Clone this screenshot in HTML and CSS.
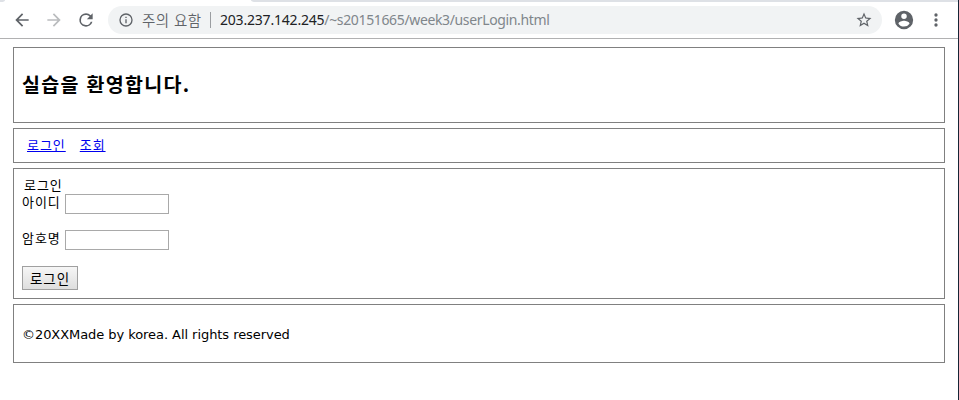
FILE: index.html
```html
<!DOCTYPE html>
<html lang="ko">
<head>
<meta charset="utf-8">
<title>userLogin</title>
<link rel="stylesheet" href="styles.css">
</head>
<body>
<div class="window">
  <div class="tabstrip"><div class="tab-before"></div><div class="tab-after"></div></div>
  <div class="toolbar">
    <svg class="nav-icon back" viewBox="0 0 24 24"><path d="M20 11H7.83l5.59-5.59L12 4l-8 8 8 8 1.41-1.41L7.83 13H20v-2z"/></svg>
    <svg class="nav-icon forward" viewBox="0 0 24 24"><path d="M12 4l-1.41 1.41L16.17 11H4v2h12.17l-5.58 5.59L12 20l8-8z"/></svg>
    <svg class="nav-icon reload" viewBox="0 0 24 24"><path d="M17.65 6.35A7.96 7.96 0 0 0 12 4a8 8 0 1 0 7.73 10h-2.08A6 6 0 1 1 12 6c1.66 0 3.14.69 4.22 1.78L13 11h7V4l-2.35 2.35z"/></svg>
    <div class="omnibox">
      <svg class="info" viewBox="0 0 24 24"><path d="M11 17h2v-6h-2v6zm1-15a10 10 0 1 0 0 20 10 10 0 0 0 0-20zm0 18a8 8 0 1 1 0-16 8 8 0 0 1 0 16zM11 9h2V7h-2v2z"/></svg>
      <span class="warning">주의 요함</span>
      <span class="separator"></span>
      <span class="url"><span class="host">203.237.142.245</span><span class="path">/~s20151665/week3/userLogin.html</span></span>
      <svg class="star" viewBox="0 0 24 24"><path d="M22 9.24l-7.19-.62L12 2 9.19 8.63 2 9.24l5.46 4.73L5.82 21 12 17.27 18.18 21l-1.63-7.03L22 9.24zM12 15.4l-3.76 2.27 1-4.28-3.32-2.88 4.38-.38L12 6.1l1.71 4.04 4.38.38-3.32 2.88 1 4.28L12 15.4z"/></svg>
    </div>
    <svg class="profile" viewBox="0 0 24 24"><path d="M12 2a10 10 0 1 0 0 20 10 10 0 0 0 0-20zm0 3a3 3 0 1 1 0 6 3 3 0 0 1 0-6zm0 14.2a7.2 7.2 0 0 1-6-3.22c.03-1.99 4-3.08 6-3.08s5.97 1.09 6 3.08a7.2 7.2 0 0 1-6 3.22z"/></svg>
    <svg class="menu" viewBox="0 0 24 24"><path d="M12 8a2 2 0 1 0 0-4 2 2 0 0 0 0 4zm0 2a2 2 0 1 0 0 4 2 2 0 0 0 0-4zm0 6a2 2 0 1 0 0 4 2 2 0 0 0 0-4z"/></svg>
  </div>
  <main class="page">
    <header class="box banner"><h2>실습을 환영합니다.</h2></header>
    <nav class="box links"><a href="#">로그인</a><a href="#">조회</a></nav>
    <section class="box login">
      <div class="legend">로그인</div>
      <div class="field"><label for="uid">아이디</label><input id="uid" type="text"></div>
      <div class="field"><label for="pw">암호명</label><input id="pw" type="password"></div>
      <button type="button">로그인</button>
    </section>
    <footer class="box footer"><span>©20XXMade by korea. All rights reserved</span></footer>
  </main>
</div>
</body>
</html>
```
FILE: styles.css
```css
* { box-sizing: border-box; }
body {
  margin: 0;
  overflow: hidden;
  background: #fff;
  color: #000;
  font: 13px/18px "DejaVu Sans", "Noto Sans CJK KR", sans-serif;
}
.window { height: 400px; border-right: 1px solid #152536; }
.tabstrip { display: flex; justify-content: space-between; height: 2px; }
.tab-before { width: 5px; background: #dee1e6; border-bottom-right-radius: 4px 2px; }
.tab-after { width: 707px; background: #dee1e6; border-bottom-left-radius: 5px 2px; }
.toolbar {
  display: flex;
  align-items: center;
  height: 37px;
  padding: 0 12px 0 12px;
  border-bottom: 1px solid #b1b1b2;
}
.toolbar svg { flex: none; fill: #5f6368; }
.nav-icon { width: 20px; height: 20px; margin-right: 12px; }
.toolbar .forward { fill: #babcbe; }
.omnibox {
  display: flex;
  align-items: center;
  width: 774px;
  height: 28px;
  padding: 0 9px 0 10px;
  border-radius: 14px;
  background: #f1f3f4;
  font-family: "Noto Sans", "Noto Sans CJK KR", sans-serif;
  font-size: 14px;
  white-space: nowrap;
}
.info { width: 16px; height: 16px; }
.warning { width: 59px; margin-left: 8px; color: #5f6368; font: 350 14.5px/20px "Noto Sans CJK KR", sans-serif; letter-spacing: .4px; }
.separator { width: 1px; height: 16px; margin: 0 9px; background: #9a9da1; }
.url { letter-spacing: -.36px; }
.host { color: #202124; letter-spacing: -.2px; }
.path { color: #80868b; }
.star { width: 18px; height: 18px; margin-left: auto; }
.profile { width: 22px; height: 22px; margin-left: 11px; }
.menu { width: 20px; height: 20px; margin-left: 11px; }
.page { display: flex; flex-direction: column; gap: 5px; padding: 8px 13px; }
.box { border: 1px solid #808080; padding-left: 8px; white-space: nowrap; }
.banner { height: 76px; padding-top: 23px; }
h2 { margin: 0; font: 700 19.5px/26px "Noto Sans CJK KR", sans-serif; letter-spacing: 1.3px; }
.links { display: flex; gap: 14px; height: 35px; padding: 7px 0 0 13px; }
.links a { height: 17px; color: #00e; }
.links, .login { font: 400 13px/17px "Noto Sans CJK KR", sans-serif; letter-spacing: .95px; }
.login { height: 131px; padding-top: 8px; }
.legend { height: 17px; padding-left: 2px; line-height: 15px; }
.field { display: flex; height: 36px; }
.field label { width: 43px; height: 17px; line-height: 15px; }
input { width: 104px; height: 20px; border: 1px solid #a9a9a9; padding: 0; background: #fff; }
button {
  display: block;
  width: 56px;
  height: 24px;
  padding: 0;
  border: 1px solid #a0a0a0;
  background: linear-gradient(#f6f6f6, #dedede);
  color: #000;
  font: 400 13.5px/20px "Noto Sans CJK KR", sans-serif;
  letter-spacing: .9px;
}
.footer { height: 59px; padding-top: 21px; letter-spacing: -.06px; }
```
